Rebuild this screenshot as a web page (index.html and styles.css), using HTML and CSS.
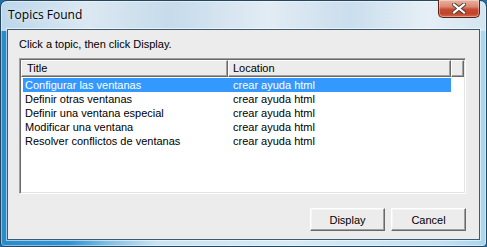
FILE: index.html
```html
<!DOCTYPE html>
<html lang="en">
<head>
    <meta charset="UTF-8">
    <title>Topics Found</title>
    <link rel="stylesheet" href="styles.css">
</head>
<body>
    <div class="window">
        <!-- Title bar -->
        <div class="titlebar">
            <span class="title">Topics Found</span>
            <button class="close-btn" aria-label="Close">
                <svg width="14" height="11" viewBox="0 0 14 11">
                    <path d="M2 1.5 L12 9.5 M12 1.5 L2 9.5" stroke="#4a3a36" stroke-width="4" stroke-linecap="square" fill="none"/>
                    <path d="M2 1.5 L12 9.5 M12 1.5 L2 9.5" stroke="#ffffff" stroke-width="2.2" stroke-linecap="square" fill="none"/>
                </svg>
            </button>
        </div>

        <div class="client">
            <p class="hint">Click a topic, then click Display.</p>

            <div class="listview">
                <div class="lv-header">
                    <div class="hcell col-title">Title</div>
                    <div class="hcell col-loc">Location</div>
                    <div class="hcell col-rest"></div>
                </div>
                <ul class="lv-rows">
                    <li class="row selected"><span class="cell-title">Configurar las ventanas</span><span class="cell-loc">crear ayuda html</span></li>
                    <li class="row"><span class="cell-title">Definir otras ventanas</span><span class="cell-loc">crear ayuda html</span></li>
                    <li class="row"><span class="cell-title">Definir una ventana especial</span><span class="cell-loc">crear ayuda html</span></li>
                    <li class="row"><span class="cell-title">Modificar una ventana</span><span class="cell-loc">crear ayuda html</span></li>
                    <li class="row"><span class="cell-title">Resolver conflictos de ventanas</span><span class="cell-loc">crear ayuda html</span></li>
                </ul>
            </div>

            <div class="actions">
                <button class="btn">Display</button>
                <button class="btn">Cancel</button>
            </div>
        </div>
    </div>
</body>
</html>
```

FILE: styles.css
```css
html, body {
    margin: 0;
    padding: 0;
    width: 487px;
    height: 247px;
    overflow: hidden;
    background: #1c6fa8;
}
.window {
    box-sizing: border-box;
    width: 487px;
    height: 247px;
    border: 1px solid #25465c;
    border-radius: 7px 7px 4px 4px;
    background:
        linear-gradient(to bottom, rgba(255,255,255,0) 0, rgba(255,255,255,0) 25px, rgba(255,255,255,0) 100%),
        linear-gradient(to right, #bcd6eb 0%, #dbe8f2 18%, #c6dbeb 35%, #e2ecf4 55%, #cadeed 72%, #e6eff6 88%, #d3e5f1 100%) top / 100% 30px no-repeat,
        linear-gradient(to right, #2a8bcb 0%, #2f93d2 14%, #7fbfe5 22%, #c9e3f2 32%, #d5eaf5 60%, #c2e1f2 90%, #a8d6ee 100%);
    box-shadow: inset 0 0 0 1px rgba(255,255,255,0.45);
    font-family: "Liberation Sans", Arial, sans-serif;
    font-size: 11px;
    color: #000;
}
.titlebar {
    height: 28px;
    display: flex;
    justify-content: space-between;
    align-items: flex-start;
    padding: 0 6px 0 7px;
}
.title {
    font-family: "Open Sans", "Noto Sans", sans-serif;
    font-size: 12px;
    line-height: 16px;
    margin-top: 6px;
    text-shadow: 0 0 6px rgba(255,255,255,0.9);
}
.close-btn {
    width: 42px;
    height: 18px;
    margin-top: -1px;
    padding: 0;
    border: 1px solid #5a2216;
    border-top: none;
    border-radius: 0 0 5px 5px;
    background: linear-gradient(to bottom, #eab3a2 0%, #dc8770 40%, #c84a30 55%, #c2452b 80%, #d76a4a 100%);
    box-shadow: inset 0 0 0 1px rgba(255,255,255,0.35);
    display: flex;
    align-items: center;
    justify-content: center;
}
.client {
    box-sizing: border-box;
    height: 211px;
    margin: 0 6px;
    border: 1px solid #3d5b6e;
    background: #ececec;
    padding: 8px 13px 0 11px;
    box-shadow: 0 0 0 1px rgba(255,255,255,0.55);
}
.hint {
    margin: 0;
    line-height: 13px;
}
.listview {
    box-sizing: border-box;
    width: 447px;
    height: 136px;
    margin-top: 7px;
    background: #fff;
    border: 1px solid;
    border-color: #a0a0a0 #fff #fff #a0a0a0;
    box-shadow: inset 1px 1px #696969, inset -1px -1px #e3e3e3;
    padding: 1px;
}
.lv-header {
    display: flex;
    height: 17px;
}
.hcell {
    box-sizing: border-box;
    height: 17px;
    line-height: 14px;
    background: #ececec;
    border-top: 1px solid #fff;
    border-left: 1px solid #fff;
    border-right: 1px solid #696969;
    border-bottom: 1px solid #696969;
    box-shadow: inset -1px -1px #a0a0a0;
}
.col-title {
    width: 207px;
    padding-left: 5px;
}
.col-loc {
    width: 223px;
    padding-left: 4px;
}
.col-rest {
    flex: 1;
}
.lv-rows {
    list-style: none;
    margin: 0;
    padding: 1px 0 0 2px;
}
.row {
    display: flex;
    width: 428px;
    height: 14px;
    line-height: 14px;
    white-space: nowrap;
}
.row.selected {
    background: #3399ff;
    color: #fff;
}
.cell-title {
    width: 205px;
    padding-left: 2px;
}
.cell-loc {
    padding-left: 3px;
}
.actions {
    display: flex;
    justify-content: flex-end;
    gap: 6px;
    margin-top: 14px;
}
.btn {
    box-sizing: border-box;
    width: 75px;
    height: 23px;
    padding: 0;
    font-family: "Liberation Sans", Arial, sans-serif;
    font-size: 11px;
    color: #000;
    background: #ececec;
    border: 1px solid;
    border-color: #fff #696969 #696969 #fff;
    box-shadow: inset -1px -1px #a0a0a0, inset 1px 1px #f4f4f4;
}
```
